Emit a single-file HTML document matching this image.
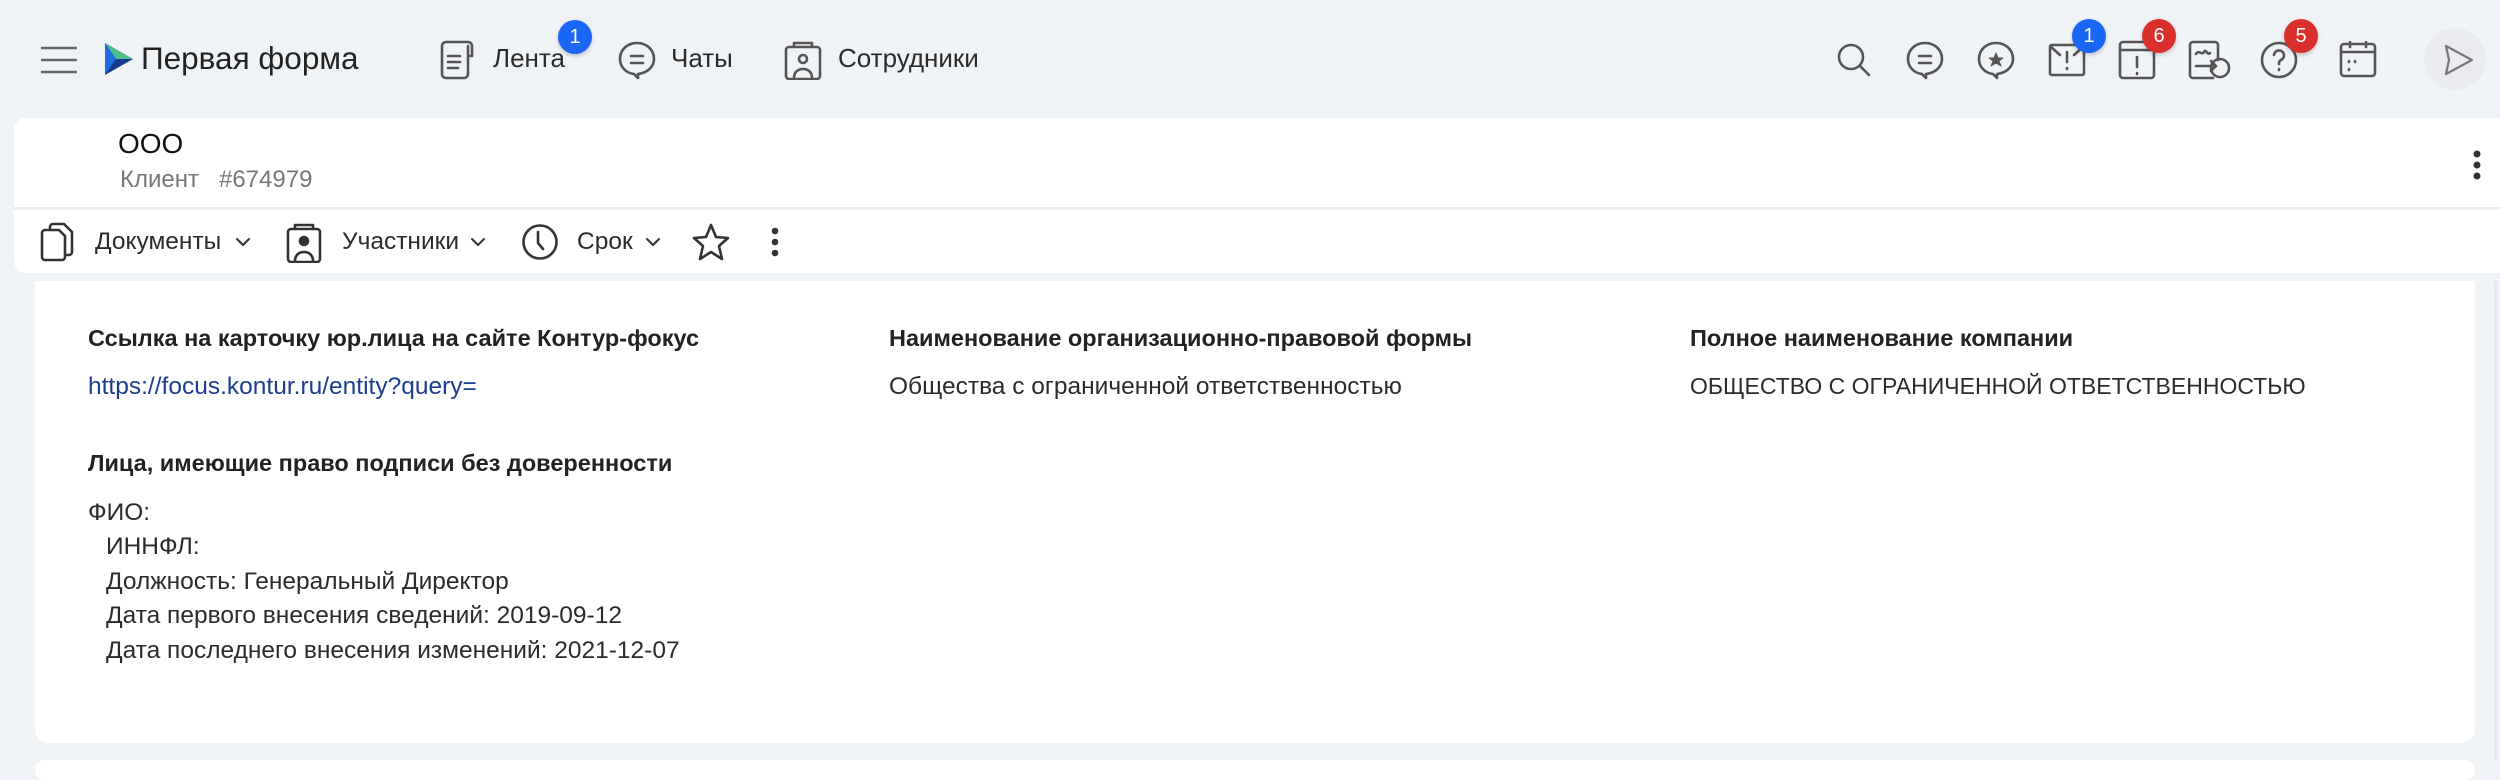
<!DOCTYPE html>
<html><head><meta charset="utf-8"><style>
*{margin:0;padding:0;box-sizing:border-box}
body{width:2500px;height:763px;background:#f0f3f6;font-family:"Liberation Sans","Noto Sans CJK SC",sans-serif;color:#2b2b2b;position:relative;overflow:hidden}
.a{position:absolute;white-space:nowrap}
.nav{font-size:26px;color:#2b2b2b;top:43px}
.badge{position:absolute;width:34px;height:34px;border-radius:50%;color:#fff;font-size:20px;text-align:center;line-height:34px;box-shadow:0 2px 4px rgba(0,0,0,.2)}
.blue{background:#1a66f5}.red{background:#d9302c}
svg{position:absolute;fill:none;stroke:#555;stroke-width:2.6;stroke-linecap:round;stroke-linejoin:round}
.h{font-size:23.5px;font-weight:bold;color:#222}
.t{font-size:24.5px;color:#2b2b2b}
.tb{font-size:24.5px;color:#2b2b2b;top:228px}
</style></head><body>
<svg style="left:41px;top:46px" width="36" height="28" viewBox="0 0 36 28"><path d="M1 2H35M1 14H35M1 26H35" stroke="#666"/></svg>
<svg style="left:104px;top:42px;stroke:none" width="30" height="34" viewBox="0 0 30 34"><path d="M1 1L29 17L1 33Z" fill="#173a8c"/><path d="M1 1L29 17L12 17Z" fill="#4dbf86"/><path d="M1 1L12 17L1 33Z" fill="#1f6be0"/></svg>
<div class="a" style="left:141px;top:40px;font-size:31.5px;color:#222">Первая форма</div>

<svg style="left:438px;top:40px" width="40" height="40" viewBox="0 0 40 40"><path d="M4 6a4 4 0 0 1 4-4h22a4 4 0 0 1 4 4v10h-4M8 2a4 4 0 0 0-4 4v28a4 4 0 0 0 4 4h18a4 4 0 0 0 4-4V6M10 16h12M10 22h12M10 28h10"/></svg>
<div class="a nav" style="left:493px">Лента</div>
<div class="badge blue" style="left:558px;top:20px">1</div>
<svg style="left:617px;top:40px" width="40" height="40" viewBox="0 0 40 40"><path d="M20 3C10 3 3 10 3 19c0 8 6 14 14 15l4 4v-4c9-1 16-7 16-15C37 10 30 3 20 3zM14 16h12M14 23h12"/></svg>
<div class="a nav" style="left:671px">Чаты</div>
<svg style="left:784px;top:40px" width="38" height="40" viewBox="0 0 38 40"><path d="M10 7V3h18v4M5 7h28a3 3 0 0 1 3 3v26a3 3 0 0 1-3 3H5a3 3 0 0 1-3-3V10a3 3 0 0 1 3-3zM10 38c0-6 4-9 9-9s9 3 9 9"/><circle cx="19" cy="19" r="4"/></svg>
<div class="a nav" style="left:838px">Сотрудники</div>

<svg style="left:1836px;top:42px" width="36" height="36" viewBox="0 0 36 36"><circle cx="15" cy="15" r="12"/><path d="M24 24l9 9"/></svg>
<svg style="left:1905px;top:40px" width="40" height="40" viewBox="0 0 40 40"><path d="M20 3C10 3 3 10 3 19c0 8 6 14 14 15l4 4v-4c9-1 16-7 16-15C37 10 30 3 20 3zM14 16h12M14 23h12"/></svg>
<svg style="left:1976px;top:40px" width="40" height="40" viewBox="0 0 40 40"><path d="M20 3C10 3 3 10 3 19c0 8 6 14 14 15l4 4v-4c9-1 16-7 16-15C37 10 30 3 20 3z"/><path d="M20 13l2 5h5l-4 3 2 5-5-3-5 3 2-5-4-3h5z" fill="#555" stroke-width="1"/></svg>
<svg style="left:2048px;top:42px" width="38" height="36" viewBox="0 0 38 36"><path d="M4 3h30a2 2 0 0 1 2 2v26a2 2 0 0 1-2 2H4a2 2 0 0 1-2-2V5a2 2 0 0 1 2-2zM3 5l9 8M35 5l-9 8M19 10v10M19 26v1"/></svg>
<div class="badge blue" style="left:2072px;top:19px">1</div>
<svg style="left:2118px;top:40px" width="38" height="40" viewBox="0 0 38 40"><path d="M5 2h28a3 3 0 0 1 3 3v30a3 3 0 0 1-3 3H5a3 3 0 0 1-3-3V5a3 3 0 0 1 3-3zM2 10h34M19 17v10M19 33v1"/></svg>
<div class="badge red" style="left:2142px;top:19px">6</div>
<svg style="left:2188px;top:40px" width="44" height="40" viewBox="0 0 44 40"><path d="M30 20V5a3 3 0 0 0-3-3H5a3 3 0 0 0-3 3v30a3 3 0 0 0 3 3h20M8 14c3-5 6 2 8-2s3 4 6 1M8 26h20M23 21l5 5-5 5"/><circle cx="32" cy="28" r="9"/></svg>
<svg style="left:2259px;top:40px" width="40" height="40" viewBox="0 0 40 40"><circle cx="20" cy="20" r="17"/><path d="M15 15a5 5 0 1 1 7 5c-2 1-2 2-2 4M20 29v1"/></svg>
<div class="badge red" style="left:2284px;top:19px">5</div>
<svg style="left:2339px;top:41px" width="38" height="38" viewBox="0 0 38 38"><path d="M5 3h28a3 3 0 0 1 3 3v26a3 3 0 0 1-3 3H5a3 3 0 0 1-3-3V6a3 3 0 0 1 3-3zM2 11h34M11 1v5M27 1v5M10 20v1M16 20v1M10 28v1"/></svg>
<div class="a" style="left:2424px;top:28px;width:62px;height:62px;border-radius:50%;background:#e9ebee"></div>
<svg style="left:2444px;top:44px;stroke:#777;stroke-width:2.2" width="30" height="32" viewBox="0 0 30 32"><path d="M2 2L28 16L2 30L5 16Z"/></svg>

<div class="a" style="left:14px;top:118px;width:2500px;height:155px;background:#fff;border-radius:12px 0 0 12px"></div>
<div class="a" style="left:14px;top:207px;width:2486px;height:3px;background:#eaecef"></div>
<div class="a" style="left:118px;top:128px;font-size:28px;color:#111">ООО</div>
<div class="a" style="left:120px;top:166px;font-size:24px;color:#777">Клиент &nbsp;&nbsp;#674979</div>
<svg style="left:2471px;top:150px;stroke:none" width="12" height="30" viewBox="0 0 12 30"><circle cx="6" cy="4" r="3.5" fill="#333"/><circle cx="6" cy="15" r="3.5" fill="#333"/><circle cx="6" cy="26" r="3.5" fill="#333"/></svg>

<svg style="left:40px;top:222px;stroke:#333" width="36" height="40" viewBox="0 0 36 40"><path d="M10 6V5a3 3 0 0 1 3-3h11l8 8v20a3 3 0 0 1-3 3h-2M5 8h14l6 6v21a3 3 0 0 1-3 3H5a3 3 0 0 1-3-3V11a3 3 0 0 1 3-3z"/></svg>
<div class="a tb" style="left:95px">Документы</div>
<svg style="left:235px;top:236px;stroke:#333;stroke-width:2" width="16" height="12" viewBox="0 0 16 12"><path d="M2 3l6 6 6-6"/></svg>
<svg style="left:286px;top:223px;stroke:#333" width="36" height="40" viewBox="0 0 36 40"><path d="M9 6V2h18v4M5 6h26a3 3 0 0 1 3 3v27a3 3 0 0 1-3 3H5a3 3 0 0 1-3-3V9a3 3 0 0 1 3-3zM9 38c0-6 4-9 9-9s9 3 9 9"/><circle cx="18" cy="18" r="4" fill="#333"/></svg>
<div class="a tb" style="left:342px">Участники</div>
<svg style="left:470px;top:236px;stroke:#333;stroke-width:2" width="16" height="12" viewBox="0 0 16 12"><path d="M2 3l6 6 6-6"/></svg>
<svg style="left:521px;top:223px;stroke:#333" width="38" height="38" viewBox="0 0 38 38"><circle cx="19" cy="19" r="16.5"/><path d="M17 9v11l5 6"/></svg>
<div class="a tb" style="left:577px">Срок</div>
<svg style="left:645px;top:236px;stroke:#333;stroke-width:2" width="16" height="12" viewBox="0 0 16 12"><path d="M2 3l6 6 6-6"/></svg>
<svg style="left:692px;top:223px;stroke:#333" width="38" height="38" viewBox="0 0 38 38"><path d="M19 2l5 12 12 1-9 8 3 13-11-7-11 7 3-13-9-8 12-1z"/></svg>
<svg style="left:769px;top:227px;stroke:none" width="12" height="30" viewBox="0 0 12 30"><circle cx="6" cy="4" r="3.3" fill="#333"/><circle cx="6" cy="15" r="3.3" fill="#333"/><circle cx="6" cy="26" r="3.3" fill="#333"/></svg>

<div class="a" style="left:35px;top:281px;width:2440px;height:462px;background:#fff;border-radius:0 0 14px 14px"></div>
<div class="a" style="left:35px;top:760px;width:2440px;height:20px;background:#fff;border-radius:10px"></div>
<div class="a" style="left:2494px;top:281px;width:3px;height:480px;background:#e4e6ea"></div>

<div class="a h" style="left:88px;top:325px">Ссылка на карточку юр.лица на сайте Контур-фокус</div>
<div class="a t" style="left:88px;top:373px;color:#1d3d8f">https://focus.kontur.ru/entity?query=</div>
<div class="a h" style="left:889px;top:325px">Наименование организационно-правовой формы</div>
<div class="a t" style="left:889px;top:373px">Общества с ограниченной ответственностью</div>
<div class="a h" style="left:1690px;top:325px">Полное наименование компании</div>
<div class="a t" style="left:1690px;top:373px;font-size:23px">ОБЩЕСТВО С ОГРАНИЧЕННОЙ ОТВЕТСТВЕННОСТЬЮ</div>

<div class="a h" style="left:88px;top:450px">Лица, имеющие право подписи без доверенности</div>
<div class="a t" style="left:88px;top:499px">ФИО:</div>
<div class="a t" style="left:106px;top:533px">ИННФЛ:</div>
<div class="a t" style="left:106px;top:568px">Должность: Генеральный Директор</div>
<div class="a t" style="left:106px;top:602px">Дата первого внесения сведений: 2019-09-12</div>
<div class="a t" style="left:106px;top:637px">Дата последнего внесения изменений: 2021-12-07</div>
</body></html>
